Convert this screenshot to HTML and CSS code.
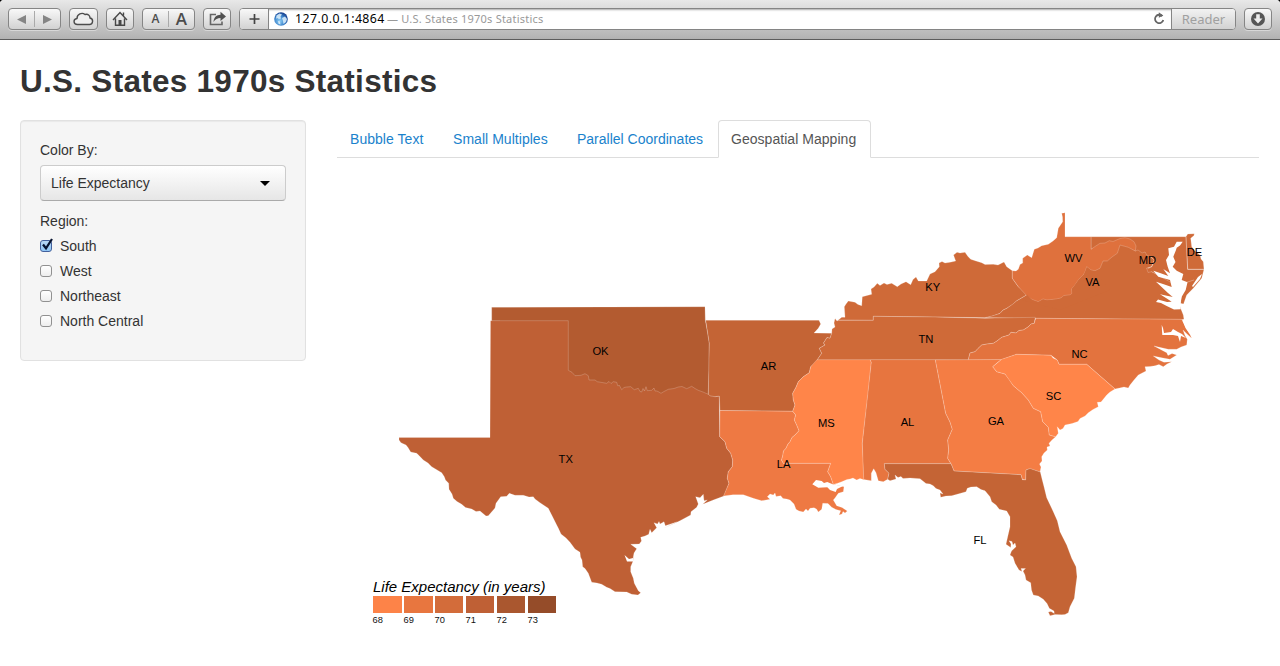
FILE: index.html
```
<!DOCTYPE html>
<html lang="en">
<head>
<meta charset="utf-8">
<title>U.S. States 1970s Statistics</title>
<link rel="stylesheet" href="styles.css">
</head>
<body>
<header class="toolbar">
  <div class="btn pair"><svg viewBox="0 0 53 22"><path d="M18 7v9l-9-4.500zM35 7v9l9-4.500z" fill="#858585"/><path d="M26.500 3v16" stroke="#aaa"/></svg></div>
  <div class="btn cloud"><svg viewBox="0 0 29 22"><path d="M8.500 16.500C4 16.500 4 11 8 10.500 8 6 13 4 16 6.500 19 5.500 21 7.500 21 10 25 11 24 16.500 20.500 16.500z" fill="#eee" stroke="#4c4c4c" stroke-width="1.400"/></svg></div>
  <div class="btn home"><svg viewBox="0 0 28 22"><path d="M7 12l7-7.500 7 7.500M9.500 10.500v6.800h9v-6.800M17.500 7.500V4.500" fill="none" stroke="#484848" stroke-width="1.400"/><path d="M12.500 17v-5h3v5z" fill="#484848"/></svg></div>
  <div class="btn pair sizes"><span class="a-small">A</span><i></i><span class="a-big">A</span></div>
  <div class="btn share"><svg viewBox="0 0 28 22"><path d="M13 6.500H7.500v10H19v-3" fill="none" stroke="#666" stroke-width="1.600"/><path d="M10.500 14c.5-5 3-7 7-7.200V3.800l5.500 4.700-5.500 4.500v-3c-3 0-5 1-7 4z" fill="#505050"/></svg></div>
  <div class="address">
    <div class="plus"><svg viewBox="0 0 29 20"><path d="M14.500 5v10M9.500 10h10" stroke="#444" stroke-width="1.700"/></svg></div>
    <div class="url">
      <svg class="globe" viewBox="0 0 14 14"><defs><radialGradient id="sea" cx=".4" cy=".65" r=".65"><stop offset="0" stop-color="#8fd0f6"/><stop offset=".6" stop-color="#3c83cb"/><stop offset="1" stop-color="#173f8e"/></radialGradient></defs><circle cx="7" cy="7" r="6.800" fill="url(#sea)"/><path d="M2.500 3.500l3-2 2.500 1-1.500 2 .5 2-2 .5-2-1-1 1zM8 6l3-1.500 2 2.500-1 3-2.500 2-.5-3zM4 9l2 .5.500 3-2-.8z" fill="#dff1fb" opacity=".85"/></svg>
      <span class="host">127.0.0.1:4864</span><span class="doc">— U.S. States 1970s Statistics</span>
      <svg class="reload" viewBox="0 0 14 14"><path d="M10.300 4.100A4.200 4.200 0 1 0 11.300 8" fill="none" stroke="#666" stroke-width="1.800"/><path d="M6.800.3v5.400l4.500-2.300z" fill="#666"/></svg>
    </div>
    <div class="reader">Reader</div>
  </div>
  <div class="btn download"><svg viewBox="0 0 28 22"><circle cx="14" cy="11" r="7" fill="#565656"/><path d="M12.200 6.300h3.600v4.200h2.700L14 15.500l-4.500-5h2.700z" fill="#eee"/></svg></div>
</header>

<main class="page">
  <h1 class="title">U.S. States 1970s Statistics</h1>
  <div class="row">
    <form class="well">
      <div class="label">Color By:</div>
      <div class="select"><span>Life Expectancy</span><svg viewBox="0 0 10 5"><path d="M0 0h10L5 5z"/></svg></div>
      <div class="label region">Region:</div>
      <div class="check"><span class="box on"><svg viewBox="0 0 14 15"><path d="M3 7.500l3 3.800L12 2" fill="none" stroke="#071330" stroke-width="2.200"/></svg></span>South</div>
      <div class="check"><span class="box"></span>West</div>
      <div class="check"><span class="box"></span>Northeast</div>
      <div class="check"><span class="box"></span>North Central</div>
    </form>
    <section class="content">
      <nav class="tabs">
        <a class="tab t1">Bubble Text</a><a class="tab t2">Small Multiples</a><a class="tab t3">Parallel Coordinates</a><a class="tab active">Geospatial Mapping</a>
      </nav>
      <svg class="map" viewBox="337 158 922 508">
        <g class="states">
          <path fill="#b35b30" d="M491.700 307.300L705 306.700 705.300 320 707.500 332 709.300 343.300 709 370 708.300 394.300 716 397V420H500V321H491.700z"/>
          <path fill="#bf6035" d="M490.500 320.700H568.300V370.300L572 372.300 575 375.700 581 375.300 585 373.700 588.300 375.700 589 380 595 380 597.300 381.700 606.700 383.300 609 381.500 611 383.500 613.300 381.700 616.700 382.300 617.700 385.700 619.500 385.500 621.700 389.700 624 387.500 626.700 387 630.700 386.700 634.300 389.700 638.300 388.300 640 391.500 641.700 392 643 388.500 644.500 391 646 386.700 647.300 390.700 651.700 390.300 654 388 655 391 656.700 391 658 391.500 661 393.300 664 391.500 668.300 389.300 674 388.500 678.300 387 682 386.500 686.700 388.700 691.700 386.300 695 388.500 698.300 390.300 703 392 708.300 394.300 710 395.700 715 396.700 719.300 396 719.700 436.700 725 441.700 726.700 448.300 730.700 453.300 732.700 460 732.300 466.700 728.300 471.700 727.300 478.300 729 483.300 724 496 713.300 500 702.700 504.300 707.300 500 704 500.700 703.300 494.300 700 497.700 695.700 496.700 698.300 504 696.700 507.300 691 511.700 690.700 515 680 520.700 661.700 529.300 676.700 522 665.300 525.700 664 521.700 660 524 659 521.500 657.500 524 654 522.700 656.700 527.700 651.700 532.700 650 529.300 648.700 534.300 645 536 640.700 537.300 641.500 541 639.300 544 630.700 544.300 636.700 548.700 634 553 633.300 556.700 633 561.300 630.700 566.700 630.700 571.700 633.300 578.300 634.300 583.300 638.300 590.700 640.700 592.700 638 595 631.700 594.300 626.700 592 615 591.700 610 588.500 606.700 587.300 601.700 584.300 597 583 591.700 582.300 588.300 573.300 585 568.500 582.700 566.700 582 560 580.500 557 580 552.300 575 549 570 542.300 566 538 561 534 558.500 528.500 556.700 525 551.700 515 548.300 508.300 540 502.700 537 500.500 535 499 533.300 496.700 529 497 523.300 495.300 515 495.300 509.300 493.300 506.700 496.300 500.700 496.700 496 503.300 495 508 493.300 510 488.300 515.700 486 516 480 511 476 511.500 471.700 509 465.500 507.500 461.700 504.300 457 501.500 453.300 498.300 452 494 449 489.300 448.700 483.300 445.500 480 444.300 476.700 441.700 472.700 431.700 466.700 428 463 423.300 460 419 455.500 416.700 453.300 410.700 452 408 447.500 406 445 401 442.700 399 440 399 437.500H490z"/>
          <path fill="#c46435" d="M705.700 320.300H819L820.700 324 818.300 328.300 814 333 831.700 333.300 830 338.300 827 337.500 825 340.700 823.500 343 825 345 819.300 348.300 821.700 353.300 818.300 358.300 816 362.300 810.700 366.700 809.300 372.700 803.300 376.700 798.300 381.700 796 387.300 792.700 393.300 793.300 400 795 405 792.700 411.300 720 410.500 719.300 396 715 396.700 710 395.700 708.300 394.300 709.300 343.300z"/>
          <path fill="#ee7943" d="M720 410.500L792.700 411.300 795.700 415 794.300 420 796.700 425 799 430.700 795 435 792 437.500 790 441.700 788 444 786 448.300 783.500 451 782.700 456 781.500 460 783.300 463.300H830.700L827.700 471.700 830.700 476.700 833.300 484.300 844 486.700 843.300 491.700 838.300 493.300 835 498 833.300 500 836.700 505.700 842 507.500 847.300 511 845 513 843 511.500 842 514 839 515 840.700 510.700 836 509.500 831.700 507.300 828 503.500 822.700 503.300 821.700 509.300 818.300 512 816.500 509 814 507.700 810 508.300 808 511 806 509 803.300 512 799 511 796 509.300 794 504 790 500 786.700 499 783 498.500 780.700 495.700 776 496.500 775 493 773.300 495 770 494 767.300 496.700 770 499.300 761.700 500.700 753.300 498.300 743.300 494.700 733 494.700 723.500 496 729 483.300 727.300 478.300 728.300 471.700 732.300 466.700 732.700 460 730.700 453.300 726.700 448.300 725 441.700 719.700 436.700z"/>
          <path fill="#ff8549" d="M817.300 359.300H870L871.300 362.300 868 394 862.300 443.300 864 479.700 860 478.500 856.700 480 853 478 850 479 847 479.500 841.700 481.700 837 483.500 833.300 484.300 830.700 476.700 827.700 471.700 830.700 463.300H783.300L781.500 460 782.700 456 783.500 451 786 448.300 788 444 790 441.700 792 437.500 795 435 799 430.700 796.700 425 794.300 420 795.700 415 792.700 411.300 795 405 793.300 400 792.700 393.300 796 387.300 798.300 381.700 803.300 376.700 809.300 372.700 810.700 366.700z"/>
          <path fill="#e7753f" d="M870 359.500H935.300L945.700 413.300 950 422 952.300 429.300 947.700 440 948.700 450 947.700 458.300 951 463.700H884.300L885 469.300 889 473.300 887.700 479.300 883.300 481.700 878.300 480.700 876 472.700 873.700 468.700 871.300 473.300 871.300 480.700 863.700 479.500 862.300 443.300 871.300 362.300z"/>
          <path fill="#f47d44" d="M935.300 359.700L1001.700 359.300 997 363 992.700 366.700 996.700 371.700 1005 374 1009 379 1013.300 385.700 1021.700 392.700 1028.300 400 1033.300 408.300 1040.700 411.700 1042.700 421.700 1048.300 427.300 1049.300 435 1055.700 436.700 1052 440 1049 443.300 1050 446 1047 447 1047.300 450 1044 453 1041.700 456.700 1042 461 1039.500 464 1041 467 1040 472 1030 468.700 1026 470 1025.700 480 1022.300 479.300 1021 474.700 954 471 951 463.700 947.700 458.300 948.700 450 947.700 440 952.300 429.300 950 422 945.700 413.300z"/>
          <path fill="#c46435" d="M884.300 463.700H951L954 471 1021 474.700 1022.300 479.700 1025.700 480 1026 470 1030 468.500 1040.300 472 1042 479 1044 486.700 1046.700 497.700 1053.300 511.700 1057.300 520.700 1060 531.700 1066.700 545 1071.700 558.300 1076 566.700 1077 576.700 1075.500 588 1074.300 598.300 1070 606.700 1068.300 612.700 1065 614.500 1061.700 614.700 1055 614.500 1050 615.700 1048.300 612 1051 611.500 1054.300 613.500 1054 611 1049.300 608.300 1047 603.500 1043.300 599.300 1038.300 596 1033.300 595 1031.500 590 1030.700 582.700 1026 580 1025 575 1023 571 1025.500 568.500 1021 568.500 1022 571.500 1019 570 1015 563.300 1013 557 1010 555 1011.500 551 1016 546.700 1015 543 1013 545 1012 541.500 1009 540.700 1011 544 1010.700 547.500 1006 544.300 1007.700 536.700 1010 526.700 1010 516.700 1006.700 511 999.300 509.300 996 505 991.700 501.700 990 496.700 985 490.700 981 489.500 976.700 486.700 971 487 967.300 488.300 966 491.700 958 494 951.700 495.700 946 496 940.700 497.300 940 493 943 494 940 490 936 488.500 933.300 485.700 930 484 926 483.500 920 478.700 910 478 903 478.500 901 476.500 898 477.500 895 475 896 479 890 480.700 887.700 479.300 889 473.300 885 469.300z"/>
          <path fill="#cf6a38" d="M985 317.700L1000 313.300 1003 310 1006.700 308.300 1016.700 300.700 1027.700 294.300 1066 285 1080 266 1095 262 1110 252 1117 243 1128 243 1140 247 1154.300 260 1151.700 266.700 1146.700 268.300 1151.700 271.700 1172 281 1181 309.300 1183.300 315 1184 319.500 1035.700 318.300z"/>
          <path fill="#cf6a38" d="M1091 236.700H1187L1187.700 269.300H1204L1201.700 278.300 1193.300 288.300 1186.700 295 1183.500 304 1180.500 303.300 1182 290 1172 283 1151.700 271.700 1148 272.500 1146.700 268.300 1151.700 266.700 1154.300 260 1151 257 1146.700 255 1145 252 1142 253 1138 250 1135.300 251 1125 243 1109.300 244 1091 249.300z"/>
          <path fill="#cf6a38" d="M1186 236.700L1187.700 234 1194.300 233.700 1194 235.500 1190.700 238.300 1191.700 246.700 1195 251 1200 255 1201 259 1203.300 261.700 1204 269.300H1187.700z"/>
          <path fill="#cf6a38" d="M838.300 320L841.700 317.300 845 317.300 844.300 306.700 846 304 848.300 301 851 301.500 855 302.300 858 304.500 861.700 305.700 862.300 296.700 871.700 294.300 871 289 874 287 877.300 283.300 880 285.500 884 283 887 284.500 891.700 283.300 897.300 286.700 901 284 906 281.700 910.700 284.700 913 279.500 916 277 918.300 281 926.700 281 930 274 935 271.700 939.300 266.700 939 263 942 261.500 945 263 950 262.300 955.700 261 953.500 255 957 252.300 960 253 965 252.300 968 256.500 970.700 259.300 976 261 981.700 262.700 985 264.500 993.300 264.300 998 265 1004 262 1006.700 266.700 1012.300 270.700 1012.300 278.300 1018.300 286.700 1023 290 1027.700 294.300 1016.700 300.700 1013 304 1006.700 308.300 1003 310 1000 313.300 992 316 985 317.700 935 317 873.300 316.300 873.300 320.300z"/>
          <path fill="#cf6a38" d="M838.300 320.300H873.300V316.300L935 317 985 318.200 1035.300 317.300 1034.300 323.300 1031 324 1028 327 1023.300 330 1019 330.500 1016 333 1011 332.300 1009 335 1001.700 337.300 997 341 993.300 343.300 987 344 981.700 345 978 348.500 975 351.700 970 353 968.300 359.700H817.300L818.300 358.300 821.700 353.300 819.300 348.300 825 345 823.500 343 825 340.700 827 337.500 830 338.300 831.700 333.300 832 329 835 327 834 323 835 318.500 837 321z"/>
          <path fill="#e3733e" d="M1035.700 318.300L1181.700 319.300 1184 323 1186.700 329 1190 334.500 1191.700 338.300 1187 334 1183 330 1185 335.500 1187.300 339.300 1186.700 345 1181 347 1176.700 349.300 1168.300 349.300 1154 346 1166.700 352.700 1168 355.500 1172 353.500 1176.700 355 1170 359.300 1163 358 1153.300 356 1159 360 1164 362.300 1171.700 361.700 1167 364 1163.300 366.700 1159 364.500 1155 365.700 1150 366.500 1145 366.700 1146 371 1138.300 375 1134 380 1130 385 1128.300 388 1124 387 1115 389 1086.700 364.300H1059L1057.300 360 1051 355.300 1016.700 354.300 1001.700 359.500 968.300 359.700 970 353 975 351.700 978 348.500 981.700 345 987 344 993.300 343.300 997 341 1001.700 337.300 1009 335 1011 332.300 1016 333 1019 330.500 1023.300 330 1028 327 1031 324 1034.300 323.300z"/>
          <path fill="#ff8549" d="M1001.700 359.300L1016.700 354.300 1051 355.300 1053 358 1057.300 360 1059 364.300H1086.700L1115 389 1110 392 1106.700 395 1101 402 1097.300 402.300 1098.300 406.700 1093 409.500 1088.300 412.700 1085 416 1080 418.500 1078 421.500 1072 423.500 1065 425 1063 428.500 1060 430 1057.300 426.700 1058.300 433.300 1055.700 436.700 1049.300 435 1048.300 427.300 1042.700 421.700 1040.700 411.700 1033.300 408.300 1028.300 400 1021.700 392.700 1013.300 385.700 1005 374 996.700 371.700 992.700 366.700z"/>
          <path fill="#df713d" d="M1012.300 270.700L1016 271 1018.300 269.300 1020 264.500 1022.700 263 1022.700 258.300 1027.300 255 1031.700 257.700 1034.300 249.300 1038 248 1041.700 245.700 1048.300 244.300 1053 241 1056.700 237.700 1058.300 228.300 1062.700 221.700 1062.500 217 1061.700 213.300 1065 212.700V236.700H1091V249.300L1095 246.500 1100 243.300 1105 243 1109.300 240.700 1113 241.500 1120 238.500 1125 237.700 1130 239 1134 241.700 1136 246 1135.300 251 1128.300 247.300 1120 245 1117.300 253.300 1112 257 1107.300 261 1103 261 1100 268.300 1095 270.700 1091 270 1086.700 266.700 1085 272 1083.300 275 1079 279 1075 285 1071.500 289 1072 293.500 1070 295 1064 295.500 1061 298 1056.700 299 1047 300 1043 299 1038.300 301.700 1032 299.500 1026.700 295.700 1018.300 286.700 1012.300 278.300z"/>
          <path fill="#cf6a38" stroke="none" d="M1027.200 294.800L1032 300 1038.300 302.200 1043 299.500 1047 300.500 1056.700 299.500 1061 298.500 1064 296 1070 295.500 1072.500 293.500 1072 289 1079 279.500 1083.800 275 1087 267.300 1091 270.500 1095 271.200 1110 290 1060 310 1022 300z"/>
        </g>
        <g class="water">
          <path d="M1182.700 241.700L1180 245.500 1176.700 247.700 1176 250 1173.300 256.700 1175.500 262 1172.700 266.700 1176.700 270.700 1183.300 274 1181.700 280 1187.500 282.300 1185.700 290 1181.700 296.700 1180.500 303.300 1180.700 309.300 1174 309.500 1166.700 306 1161 303 1156 302 1158 299.500 1167 302 1171.700 301.700 1166 298 1160 294.300 1172.700 297 1168 293 1156 281.700 1163 284 1171.700 287 1170 280 1158.300 276.700 1153.300 270.700 1160 273 1168.300 276 1163.300 269 1170 273.300 1167.700 266.700 1166 260 1169 255 1168.300 248.300 1174 246.700 1176.700 241.700z"/>
          <path d="M812.300 484.300L816 480 821.700 481 824 483 827.300 482 833.300 484.500 843 486 837 489 835.700 492 830 490 827.300 487.300 818.300 487.700z"/>
          <path d="M1161.700 325L1163 328 1164 333 1171 332 1173 329 1178 332 1182 334 1186 338 1181 336 1180 342 1178 336 1173 335 1162.300 335 1162 331z"/>
          <path d="M1202 274l-2 5-7 8-1-1 6-9zM1183.500 319l4 9 3 7-5-7-3-7zM624.500 555l4.500 4 4-1v3.500h-6z"/>
        </g>
        <path class="border" d="M1186.500 282.300L1194 280M1148 268.500l4-2 2.500-6.500M1186 237L1187.700 269.300H1204"/>
        <g class="names">
          <text x="600.500" y="355">OK</text><text x="565.700" y="463">TX</text><text x="768.500" y="370">AR</text><text x="783.700" y="468">LA</text><text x="826.300" y="427">MS</text><text x="907.500" y="426">AL</text><text x="996" y="425">GA</text><text x="980" y="544">FL</text><text x="1053.500" y="400">SC</text><text x="1079.500" y="358">NC</text><text x="926" y="343">TN</text><text x="932.700" y="291">KY</text><text x="1073.500" y="262">WV</text><text x="1092.500" y="286">VA</text><text x="1147.500" y="264">MD</text><text x="1194.500" y="256">DE</text>
        </g>
        <text class="legend-title" x="373" y="592" textLength="172.500">Life Expectancy (in years)</text>
        <g class="swatches">
          <path fill="#fd8348" d="M373 596h29v17h-29z"/><path fill="#e8763f" d="M404 596h29v17h-29z"/><path fill="#d36c3a" d="M435 596h28v17h-28z"/><path fill="#bf6035" d="M466 596h28v17h-28z"/><path fill="#aa572f" d="M497 596h28v17h-28z"/><path fill="#954c29" d="M528 596h28v17h-28z"/>
        </g>
        <g class="ticks"><text x="372.500" y="623">68</text><text x="403.500" y="623">69</text><text x="434.500" y="623">70</text><text x="465.500" y="623">71</text><text x="496.500" y="623">72</text><text x="527.500" y="623">73</text></g>
      </svg>
    </section>
  </div>
</main>
</body>
</html>
```
FILE: styles.css
```
* { box-sizing: border-box; }
body { margin: 0; background: #fff; color: #333; font: 14px/20px "Liberation Sans", Arial, sans-serif; overflow: hidden; }
svg { display: block; }
.toolbar { display: flex; height: 40px; padding: 8px 8px 0; gap: 8px; border-bottom: 1px solid #5c5c5c; border-radius: 4px 4px 0 0; background: linear-gradient(#e8e8e8, #b2b2b2); box-shadow: 0 -3px 0 #000; }
.btn { width: 28px; height: 22px; border: 1px solid #858585; border-radius: 4px; background: linear-gradient(#f8f8f8, #d2d2d2); box-shadow: 0 1px 0 rgba(255,255,255,.4); }
.btn svg { width: calc(100% + 2px); height: 22px; margin: -1px; }
.pair { width: 53px; }
.cloud { width: 29px; }
.sizes { display: flex; align-items: center; color: #4c4c4c; font-family: "Open Sans", sans-serif; font-weight: 600; }
.sizes span { width: 26px; text-align: center; }
.sizes i { width: 1px; height: 16px; background: #aaa; }
.a-small { font-size: 12px; }
.a-big { font-size: 17px; }
.address { display: flex; flex: 1; height: 22px; border: 1px solid #858585; border-radius: 4px; background: #fff; overflow: hidden; }
.plus { width: 29px; border-right: 1px solid #858585; background: linear-gradient(#f8f8f8, #d2d2d2); }
.plus svg { height: 20px; }
.url { display: flex; flex: 1; align-items: center; padding: 0 5px 0 5px; box-shadow: inset 0 2px 2px -1px #aaa; font-family: "Noto Sans", sans-serif; white-space: nowrap; }
.globe { width: 14px; height: 14px; margin-right: 7px; }
.host { width: 92px; color: #000; font-size: 12.300px; letter-spacing: .450px; }
.doc { color: #999; font-size: 11px; letter-spacing: .220px; }
.reload { width: 14px; height: 14px; margin-left: auto; }
.reader { width: 64px; border-left: 1px solid #858585; background: linear-gradient(#f2f2f2, #d2d2d2); color: #a0a0a0; font: 13px/20px "Noto Sans", sans-serif; text-align: center; }
.page { padding: 21px 21px 0 20px; }
.title { margin: 0; font-size: 31.500px; line-height: 40px; font-weight: bold; letter-spacing: .270px; }
.row { display: flex; gap: 31px; margin-top: 19px; }
.well { width: 286px; height: 241px; flex: none; padding: 19px; border: 1px solid #e1e1e1; border-radius: 4px; background: #f5f5f5; box-shadow: inset 0 1px 1px rgba(0,0,0,.05); }
.select { display: flex; align-items: center; justify-content: space-between; height: 36px; margin: 5px 0 10px; padding: 0 15px 0 10px; border: 1px solid #ccc; border-bottom-color: #aaa; border-radius: 4px; background: linear-gradient(#fff, #e6e6e6); }
.select svg { width: 10px; height: 5px; }
.check { display: flex; align-items: center; gap: 8px; margin-top: 5px; }
.box { width: 12px; height: 12px; border: 1px solid #919191; border-radius: 3px; background: linear-gradient(#fff, #eee); }
.on { border-color: #43619d; background: linear-gradient(#b9d7f4, #8fc5f5); }
.on svg { width: 14px; height: 15px; margin: -4px 0 0 -1px; overflow: visible; }
.content { flex: 1; min-width: 0; }
.tabs { display: flex; height: 38px; border-bottom: 1px solid #ddd; }
.tab { height: 38px; margin-right: 2px; padding: 8px 12px; border: 1px solid transparent; border-radius: 4px 4px 0 0; color: #1a82cc; white-space: nowrap; letter-spacing: .040px; }
.t1 { width: 101px; }
.t2 { width: 122px; }
.t3 { width: 152px; letter-spacing: 0; }
.active { width: 153px; border-color: #ddd #ddd #fff; background: #fff; color: #555; }
.map { width: 922px; height: 508px; }
.states { stroke: #fff; stroke-opacity: .22; stroke-width: .900; stroke-linejoin: round; }
.water { fill: #fff; }
.border { fill: none; stroke: #fff; stroke-opacity: .3; }
.names { fill: #000; font-size: 11.200px; text-anchor: middle; }
.legend-title { font-size: 15px; font-style: italic; fill: #000; }
.ticks { font-size: 9.300px; fill: #111; }
```
